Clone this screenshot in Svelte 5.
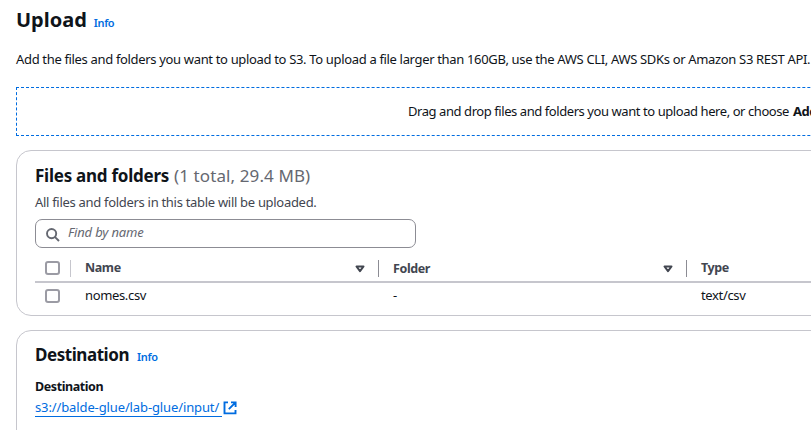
<script>
  const columns = [
    { label: 'Name', value: 'nomes.csv' },
    { label: 'Folder', value: '-' },
    { label: 'Type', value: 'text/csv' }
  ];
</script>

<main>
  <header class="title">
    <h1>Upload</h1>
    <a class="info">Info</a>
  </header>
  <p class="intro">Add the files and folders you want to upload to S3. To upload a file larger than 160GB, use the AWS CLI, AWS SDKs or Amazon S3 REST API.</p>

  <div class="drop"><span>Drag and drop files and folders you want to upload here, or choose</span><b>Add files</b></div>

  <section class="card files">
    <div class="heading"><h2>Files and folders</h2><span class="count">(1 total, 29.4 MB)</span></div>
    <p class="sub">All files and folders in this table will be uploaded.</p>
    <div class="search">
      <svg width="14" height="14" viewBox="0 0 14 14" fill="none" stroke="#656871" stroke-width="1.9">
        <circle cx="5.6" cy="5.6" r="4.6" /><path d="M8.8 8.8l4.2 4.2" />
      </svg>
      <span>Find by name</span>
    </div>
    <div class="table">
      <div class="row head">
        <div class="select"><i class="box"></i></div>
        {#each columns as column, i}
          <div class="cell">
            <span class:low={i === 1}>{column.label}</span>
            {#if i < 2}
              <svg width="10" height="8" viewBox="0 0 10 8" fill="none" stroke="#424650" stroke-width="2" stroke-linejoin="round">
                <path d="M1.5 1.5h7L5 6.2z" />
              </svg>
            {/if}
          </div>
        {/each}
      </div>
      <div class="row body">
        <div class="select"><i class="box"></i></div>
        {#each columns as column}
          <div class="cell"><span>{column.value}</span></div>
        {/each}
      </div>
    </div>
  </section>

  <section class="card destination">
    <div class="heading"><h2>Destination</h2><a class="info">Info</a></div>
    <div class="label">Destination</div>
    <a class="link"><span>s3://balde-glue/lab-glue/input/</span>
      <svg width="14" height="14" viewBox="0 0 14 14" fill="none" stroke="#006ce0" stroke-width="1.9">
        <path d="M5 1.4H1.5v11h11V9M8 1.4h4.6V6M12.3 1.7L5.8 8.2" />
      </svg>
    </a>
  </section>
</main>

<style>
  :global(body) { background: #fff; overflow: hidden; }
  main {
    box-sizing: border-box;
    width: 811px;
    height: 430px;
    overflow: hidden;
    padding: 8px 0 0 16px;
    font: 13px/20px "Noto Sans", sans-serif;
    color: #0f141a;
    white-space: nowrap;
  }
  h1, h2, p { margin: 0; }
  .title { display: flex; align-items: baseline; gap: 7px; height: 24px; }
  h1 { font-size: 20px; line-height: 24px; font-weight: 700; }
  h2 { font-size: 17px; line-height: 22px; font-weight: 700; letter-spacing: -0.25px; }
  .info { font-size: 11px; line-height: 16px; font-weight: 600; letter-spacing: -0.3px; color: #006ce0; }
  .title .info { letter-spacing: -0.4px; }
  .intro { margin-top: 17px; height: 20px; letter-spacing: -0.335px; }
  .drop {
    display: flex;
    gap: 4px;
    box-sizing: border-box;
    width: 1200px;
    height: 49px;
    margin-top: 18px;
    padding: 13px 0 0 391px;
    border: 1px dashed #006ce0;
    letter-spacing: -0.43px;
  }
  .card {
    box-sizing: border-box;
    width: 1200px;
    border: 1px solid #c6c6cd;
    border-radius: 15px;
    padding-left: 18px;
  }
  .files { margin-top: 14px; height: 166px; padding-top: 14px; }
  .heading { display: flex; align-items: baseline; height: 22px; }
  .count { margin-left: 5px; font-size: 17px; line-height: 22px; letter-spacing: 0.1px; color: #656871; }
  .sub { margin-top: 5px; height: 20px; letter-spacing: -0.3px; color: #424650; }
  .search {
    display: flex;
    align-items: center;
    box-sizing: border-box;
    width: 381px;
    height: 29px;
    margin-top: 7px;
    padding-left: 10px;
    border: 1px solid #8c8c94;
    border-radius: 7px;
    color: #656871;
    font-style: italic;
    letter-spacing: -0.16px;
  }
  .search svg { margin-top: 2px; }
  .search span { margin: -3px 0 0 8px; }
  .table { margin-top: 12px; }
  .row { display: flex; }
  .head { height: 21px; border-bottom: 2px solid #c6c6cd; color: #424650; font-size: 12.5px; font-weight: 700; letter-spacing: -0.4px; }
  .select { box-sizing: border-box; width: 36px; height: 17px; padding: 1px 0 0 10px; border-right: 1px solid #c6c6cd; }
  .box { display: block; box-sizing: border-box; width: 15px; height: 14px; border: 2px solid #9b9ba4; border-radius: 3px; }
  .cell { display: flex; box-sizing: border-box; width: 308px; height: 17px; padding: 0 13px 0 14px; justify-content: space-between; line-height: 16px; border-right: 1px solid #8c8c94; }
  .cell svg { margin-top: 5px; }
  .low { position: relative; top: 1px; }
  .body { margin-top: 5px; }
  .body .select, .body .cell { border-color: transparent; }
  .body .cell { line-height: 14px; letter-spacing: -0.35px; }
  .destination { margin-top: 14px; height: 130px; padding-top: 13px; }
  .destination h2 { letter-spacing: -0.45px; }
  .destination .info { margin-left: 8px; }
  .label { margin-top: 12px; line-height: 18px; font-size: 12.5px; font-weight: 700; letter-spacing: -0.42px; }
  .link { display: flex; align-items: center; margin-top: 1px; height: 20px; color: #006ce0; letter-spacing: -0.12px; }
  .link span { padding-right: 3px; line-height: 18px; border-bottom: 1px solid #006ce0; }
  .link svg { margin-left: 1px; margin-top: 1px; }
</style>
